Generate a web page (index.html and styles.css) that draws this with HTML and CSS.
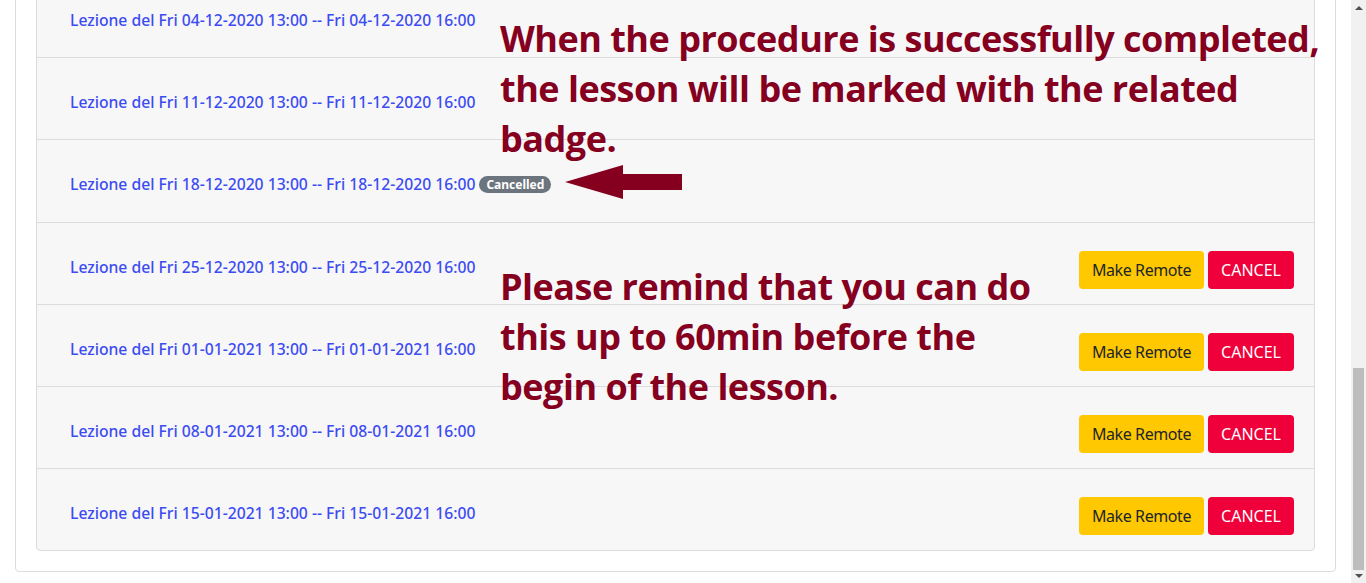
FILE: index.html
```html
<!DOCTYPE html>
<html lang="en">
<head>
<meta charset="utf-8">
<title>Lezioni</title>
<link rel="stylesheet" href="styles.css">
</head>
<body>
<div class="viewport">
  <div class="card">
    <ul class="lessons">
      <li class="lesson"><a class="lesson-link" href="#">Lezione del Fri 04-12-2020 13:00 -- Fri 04-12-2020 16:00</a></li>
      <li class="lesson"><a class="lesson-link" href="#">Lezione del Fri 11-12-2020 13:00 -- Fri 11-12-2020 16:00</a></li>
      <li class="lesson"><a class="lesson-link" href="#">Lezione del Fri 18-12-2020 13:00 -- Fri 18-12-2020 16:00</a><span class="badge">Cancelled</span></li>
      <li class="lesson"><a class="lesson-link" href="#">Lezione del Fri 25-12-2020 13:00 -- Fri 25-12-2020 16:00</a><div class="actions"><button class="btn btn-remote">Make Remote</button><button class="btn btn-cancel">CANCEL</button></div></li>
      <li class="lesson"><a class="lesson-link" href="#">Lezione del Fri 01-01-2021 13:00 -- Fri 01-01-2021 16:00</a><div class="actions"><button class="btn btn-remote">Make Remote</button><button class="btn btn-cancel">CANCEL</button></div></li>
      <li class="lesson"><a class="lesson-link" href="#">Lezione del Fri 08-01-2021 13:00 -- Fri 08-01-2021 16:00</a><div class="actions"><button class="btn btn-remote">Make Remote</button><button class="btn btn-cancel">CANCEL</button></div></li>
      <li class="lesson"><a class="lesson-link" href="#">Lezione del Fri 15-01-2021 13:00 -- Fri 15-01-2021 16:00</a><div class="actions"><button class="btn btn-remote">Make Remote</button><button class="btn btn-cancel">CANCEL</button></div></li>
    </ul>
  </div>
  <p class="note note-top">When the procedure is successfully completed,<br>the lesson will be marked with the related<br>badge.</p>
  <svg class="arrow" width="118" height="36" viewBox="0 0 118 36" aria-hidden="true"><polygon points="0,18 58,1 58,10 117,10 117,26 58,26 58,35" fill="#85001f"/></svg>
  <p class="note note-bottom">Please remind that you can do<br>this up to 60min before the<br>begin of the lesson.</p>
</div>
<div class="scrollbar" aria-hidden="true">
  <div class="sb-arrow sb-up"></div>
  <div class="sb-track"><div class="sb-thumb"></div></div>
  <div class="sb-arrow sb-down"></div>
</div>
</body>
</html>
```
FILE: styles.css
```css
html, body {
  margin: 0;
  padding: 0;
  height: 583px;
  overflow: hidden;
  background: #ffffff;
}
body {
  display: flex;
  font-family: "Noto Sans", "Open Sans", sans-serif;
}
.viewport {
  position: relative;
  flex: 1;
  overflow: hidden;
  padding: 0 15px 0 15px;
}
.card {
  margin-top: -46px;
  border: 1px solid #dcdcdc;
  border-radius: 4px;
  padding: 20px;
  background: #fff;
}
.lessons {
  list-style: none;
  margin: 0;
  padding: 0;
  border: 1px solid #dcdcdc;
  border-radius: 4px;
  background: #f7f7f7;
}
.lesson {
  display: flex;
  align-items: center;
  min-height: 38.2px;
  padding: 28px 20px 15px 33px;
  border-bottom: 1px solid #dcdcdc;
}
.lesson:last-child {
  border-bottom: 0;
}
.lesson-link {
  color: #3c4cf2;
  text-decoration: none;
  font-size: 15.7px;
  font-weight: 500;
  line-height: 20px;
  margin-bottom: 6px;
}
.badge {
  display: inline-block;
  margin: 0 0 6px 4px;
  padding: 0 7px;
  height: 17px;
  line-height: 17px;
  border-radius: 9px;
  background: #6c757d;
  color: #fff;
  font-size: 12px;
  font-weight: 700;
}
.actions {
  margin-left: auto;
  display: flex;
  gap: 4px;
}
.btn {
  height: 38px;
  padding: 0 13px;
  border: 0;
  border-radius: 4px;
  font-family: "Noto Sans", sans-serif;
  font-size: 16px;
}
.btn-remote {
  background: #ffc800;
  color: #212529;
  letter-spacing: -0.4px;
}
.btn-cancel {
  background: #f0003a;
  color: #fff;
}
.note {
  position: absolute;
  left: 500px;
  margin: 0;
  font-family: "Open Sans", sans-serif;
  font-weight: 700;
  font-size: 36px;
  line-height: 50px;
  letter-spacing: -0.5px;
  color: #85001f;
  white-space: nowrap;
}
.note-top { top: 14px; }
.note-bottom { top: 262px; }
.arrow {
  position: absolute;
  left: 565px;
  top: 164px;
}
.scrollbar {
  width: 15px;
  flex: 0 0 15px;
  background: #f1f1f1;
  display: flex;
  flex-direction: column;
}
.sb-arrow {
  height: 15px;
  display: flex;
  align-items: center;
  justify-content: center;
}
.sb-up::before, .sb-down::before {
  content: "";
  width: 0;
  height: 0;
  border-left: 4px solid transparent;
  border-right: 4px solid transparent;
}
.sb-up::before { border-bottom: 4px solid #505050; }
.sb-down::before { border-top: 4px solid #505050; }
.sb-track {
  flex: 1;
  display: flex;
  flex-direction: column;
  justify-content: flex-end;
  padding: 0 2px 0 2px;
}
.sb-thumb {
  height: 202px;
  background: #bdbdbd;
  margin-bottom: -2px;
}
```
